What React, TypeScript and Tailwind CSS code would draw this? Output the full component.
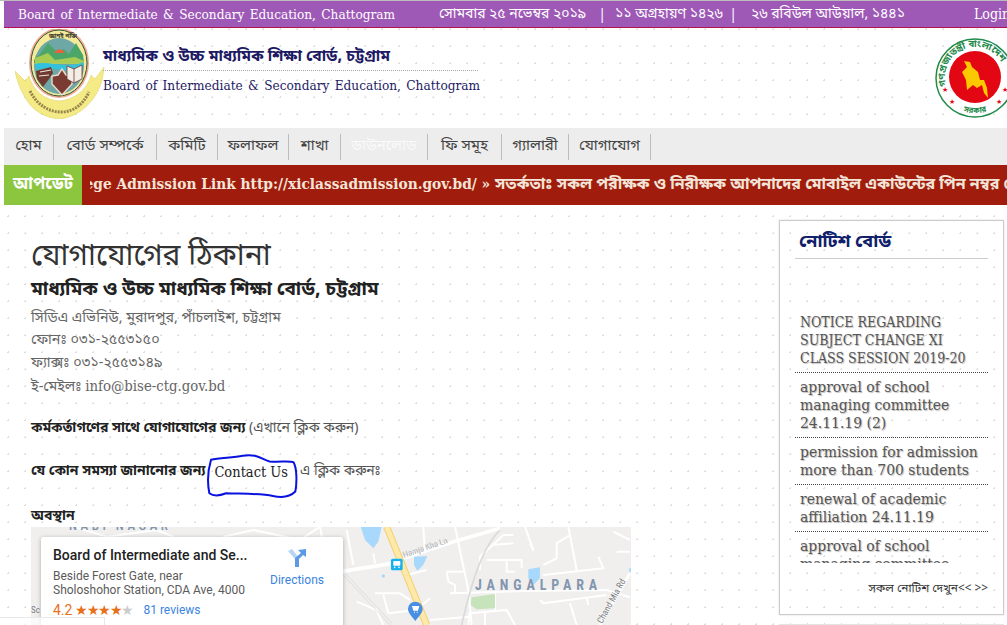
import React from "react";

const bn = "font-['Noto_Sans_Bengali','Noto_Serif_Bengali','Lohit_Bengali','Noto_Sans','DejaVu_Serif',serif]";
const serif = "font-['DejaVu_Serif','Noto_Sans_Bengali','Noto_Serif_Bengali',serif] [font-stretch:condensed]";

const menu = [
  { label: "হোম", w: "w-[50px]" },
  { label: "বোর্ড সম্পর্কে", w: "w-[103px]" },
  { label: "কমিটি", w: "w-[61px]" },
  { label: "ফলাফল", w: "w-[71px]" },
  { label: "শাখা", w: "w-[52px]" },
  { label: "ডাউনলোড", w: "w-[87px]", faded: true },
  { label: "ফি সমূহ", w: "w-[74px]" },
  { label: "গ্যালারী", w: "w-[67px]" },
  { label: "যোগাযোগ", w: "w-[82px]" },
];

const notices = [
  { text: ["NOTICE REGARDING", "SUBJECT CHANGE XI", "CLASS SESSION 2019-20"], cls: "h-[60px] text-[14px]" },
  { text: ["approval of school", "managing committee", "24.11.19 (2)"], cls: "h-[65px] pt-[5px] text-[15.5px]" },
  { text: ["permission for admission", "more than 700 students"], cls: "h-[47px] pt-[5px] text-[15.5px]" },
  { text: ["renewal of academic", "affiliation 24.11.19"], cls: "h-[47px] pt-[5px] text-[15.5px]" },
  { text: ["approval of school", "managing committee"], cls: "h-[46px] pt-[5px] text-[15.5px]" },
];

const BoardLogo = () => (
  <svg width="90" height="90" viewBox="0 0 90 90" className="shrink-0">
    <path d="M0 42 L10 52 L14 47 C18 62 30 71 44 72 C58 71 72 62 76 46 L80 50 L89 38 C88 52 84 62 78 70 C68 83 56 89 44 90 C30 89 17 81 11 70 C5 60 2 52 0 42Z" fill="#f4ea86" stroke="#dccf62" strokeWidth="0.5" />
    <path d="M15 62 C22 76 34 83 46 83 C58 83 68 76 74 63" fill="none" stroke="#77643a" strokeWidth="3" strokeDasharray="2 1" opacity="0.75" />
    <ellipse cx="44" cy="34" rx="30" ry="35" fill="#f3a78e" />
    <ellipse cx="44" cy="34" rx="28" ry="33" fill="#f5ea9b" stroke="#2e5a3a" strokeWidth="1" />
    <ellipse cx="44" cy="37" rx="25" ry="28" fill="#6fa6a6" />
    <path d="M19 32 C20 28 22 27 24 26 L33 14 L43 24 L49 20 L54 25 L61 14 L68 26 L69 34 L19 34Z" fill="#4aa768" />
    <path d="M39 24 A6 6 0 0 1 50 24Z" fill="#e6623c" />
    <path d="M20 29 L33 24 L40 31 L60 28 L69 32 L69 35 L20 35Z" fill="#bfd44e" opacity="0.8" />
    <path d="M20 35 C32 31 50 41 69 33 L68 39 C52 44 34 37 21 41Z" fill="#31c3de" />
    <path d="M21 42 L36 38 L38 44 L34 50 L28 58 L22 50Z" fill="#6e3a30" />
    <path d="M25 43 L36 41 M24 47 L34 46" stroke="#f1e6d8" strokeWidth="1.2" />
    <path d="M43 46 L47 40 L51 46 L57 47 L57 55 L47 66 L37 55 L37 47Z" fill="#7a3b32" stroke="#eadbcb" strokeWidth="1.4" />
    <path d="M52 37 L59 40 L67 36 L67 50 L59 54 L52 50Z" fill="#f4efe6" stroke="#6e3a30" strokeWidth="0.8" />
    <path d="M59 40 L59 54" stroke="#6e3a30" strokeWidth="0.8" />
    <text x="34" y="9" fontSize="6" fontWeight="700" fill="#3b3b2c" className={bn}>জ্ঞানই শক্তি</text>
  </svg>
);

const GovLogo = () => (
  <svg width="80" height="80" viewBox="0 0 80 80" className="shrink-0">
    <circle cx="40" cy="40" r="39" fill="#fff" stroke="#1f8a4a" strokeWidth="1.5" />
    <circle cx="40" cy="39" r="26" fill="#e30613" />
    <path d="M29 23 L35 24 L37 29 L43 34 L45 42 L49 42 L52 50 L53 60 L49 55 L47 47 L42 50 L38 47 L32 52 L31 42 L27 34 L32 29Z" fill="#fcc900" />
    <text x="7" y="54" fontSize="7" fill="#e30613">★</text>
    <text x="14" y="66" fontSize="7" fill="#e30613">★</text>
    <text x="67" y="54" fontSize="7" fill="#e30613">★</text>
    <text x="61" y="66" fontSize="7" fill="#e30613">★</text>
    <defs>
      <path id="sealTop" d="M11.4 48 A30 30 0 1 1 68.6 48" />
      <path id="sealBottom" d="M12.3 62 A36 36 0 0 0 67.7 62" />
    </defs>
    <text fontSize="9.5" fontWeight="700" fill="#1f8a4a" className={bn}>
      <textPath href="#sealTop">গণপ্রজাতন্ত্রী বাংলাদেশ</textPath>
    </text>
    <text fontSize="8" fontWeight="700" fill="#1f8a4a" textAnchor="middle" className={bn}>
      <textPath href="#sealBottom" startOffset="50%">সরকার</textPath>
    </text>
  </svg>
);

const MapBackdrop = () => (
  <svg width="600" height="98" viewBox="0 0 600 98" className="block">
    <rect width="600" height="98" fill="#f0efed" />
    <g transform="translate(309 -17) scale(0.3333)" fill="none" strokeLinejoin="round">
      <g stroke="#fff" strokeWidth="6">
        <path d="M-10 187 C60 175 100 170 155 160 L190 145 L340 95 L480 55" strokeWidth="11" />
        <path d="M345 50 L368 160 L385 240 L395 345 M250 50 L255 130 M320 185 L375 185 M320 185 L325 215 L345 225 L345 250" />
        <path d="M330 250 L600 242 L800 240 L870 262 M385 345 L388 310 L500 300 L525 345 M435 305 L435 345 M465 250 L465 300" />
        <path d="M105 250 L180 250 L210 270 M130 255 L145 310 L230 300 L270 265 M100 130 L105 160 M20 60 L40 165 M50 275 L110 300 L130 345 M270 330 L390 320" />
        <path d="M420 180 L420 140 L490 75 L520 75 M440 150 L545 150 L545 175 M455 105 L520 100 M500 150 L500 185 L525 185 M200 195 L260 180" />
        <path d="M555 50 L580 120 L570 100 M610 165 L650 145 L650 100 L690 75 M685 50 L710 180 M610 195 L790 175 L775 140 M600 270 L610 280 L800 255 M690 280 L710 345 M740 260 L745 285 M820 65 L870 90 M830 125 L870 125" />
        <path d="M780 345 L870 190" strokeWidth="9" />
        <path d="M-60 50 L-40 160 M-350 80 L-260 60 L-120 90 L-60 50 M-800 50 L-700 80 L-550 60 L-500 80" />
      </g>
      <path d="M10 195 L150 345 M16 190 L156 340" stroke="#d4d4d4" strokeWidth="2" />
      <path d="M480 60 C440 100 405 170 365 345" stroke="#d8dadd" strokeWidth="5" />
      <path d="M140 50 L260 345" stroke="#f5cf72" strokeWidth="21" />
      <path d="M140 50 L260 345" stroke="#fde9a8" strokeWidth="15" />
      <path d="M62 50 L125 50 L115 95 L100 115 L75 90Z M222 140 L262 138 L250 165 L232 182 L222 165Z M565 178 L600 172 L600 205 L580 225 L565 205Z M865 180 L875 170 L875 190Z" fill="#a8d8fb" />
      <circle cx="130" cy="198" r="5" fill="#a8d8fb" />
      <path d="M395 262 L465 252 L465 295 L410 298 L392 285Z" fill="#c6e3bb" />
      <rect x="153" y="146" width="35" height="35" rx="5" fill="#14b2ee" />
      <rect x="160" y="153" width="21" height="14" rx="2" fill="#fff" />
      <circle cx="164" cy="172" r="2.5" fill="#fff" />
      <circle cx="177" cy="172" r="2.5" fill="#fff" />
      <path d="M204 297 A22 22 0 0 1 248 297 C248 310 235 320 226 333 C217 320 204 310 204 297Z" fill="#4a90e2" />
      <path d="M216 288 L238 288 L234 302 L220 302Z M222 305 h3 v3 h-3Z M230 305 h3 v3 h-3Z" fill="#fff" />
    </g>
    <text x="373" y="31" fontSize="8.5" fill="#7b7f85" fontFamily="Roboto" stroke="#fff" strokeWidth="0.2" transform="rotate(-19 373 31)">Hamja Kha Ln</text>
    <text x="444" y="63" fontSize="14" fontWeight="700" letterSpacing="4.9" fill="#8396b0" fontFamily="Roboto">JANGALPARA</text>
    <text x="571" y="97" fontSize="9" fill="#7b7f85" fontFamily="Roboto" transform="rotate(-61 571 97)">Chand Mia Rd</text>
    <text x="38" y="3" fontSize="13" fontWeight="500" letterSpacing="3.5" fill="#7f93ad" fontFamily="Roboto">NABI NAGAR</text>
    <text x="0" y="86" fontSize="9" fill="#7b7f85" fontFamily="Roboto">Sc</text>
  </svg>
);

const App = () => {
  return (
    <div className={`relative h-[625px] w-[1007px] overflow-hidden bg-white bg-[radial-gradient(circle,#dedede_1px,transparent_1px)] bg-[size:17px_17px] bg-[position:0px_4px] ${serif}`}>
      <div className="border-t border-[#bbb]" />
      <div className="pl-1">
        <div className="flex h-[27px] items-center overflow-hidden whitespace-nowrap border-b border-[#b3124e] bg-[#9e59b7] pl-[14px] text-[14px] text-white">
          <span className="w-[421px] shrink-0 text-[13.5px] [word-spacing:1.5px]">Board of Intermediate &amp; Secondary Education, Chattogram</span>
          <span className={`w-[161px] shrink-0 ${bn}`}>সোমবার ২৫ নভেম্বর ২০১৯</span>
          <span className="w-[15px] shrink-0">|</span>
          <span className={`w-[116px] shrink-0 ${bn}`}>১১ অগ্রহায়ণ ১৪২৬</span>
          <span className="w-[20px] shrink-0">|</span>
          <span className={`w-[223px] shrink-0 ${bn}`}>২৬ রবিউল আউয়াল, ১৪৪১</span>
          <span>Login</span>
        </div>
      </div>

      <header className="flex h-[100px] items-start pl-[15px]">
        <div className="mt-[1px]">
          <BoardLogo />
        </div>
        <div className="mt-[16px] w-[375px] shrink-0 -ml-[2px]">
          <div className={`h-[27px] border-b border-dotted border-[#aaa] text-[15.7px] font-bold leading-[26px] text-[#1d1a63] ${bn}`}>
            মাধ্যমিক ও উচ্চ মাধ্যমিক শিক্ষা বোর্ড, চট্টগ্রাম
          </div>
          <div className="mt-[4px] whitespace-nowrap text-[13.5px] leading-[20px] text-[#1d1a63] [word-spacing:1.5px]">
            Board of Intermediate &amp; Secondary Education, Chattogram
          </div>
        </div>
        <div className="ml-auto -mr-[8px] mt-[10px]">
          <GovLogo />
        </div>
      </header>

      <div className="pl-1">
        <nav className="flex h-[37px] items-center bg-[#ededed]">
          {menu.map((m) => (
            <a
              key={m.label}
              className={`flex h-[26px] items-center justify-center whitespace-nowrap border-r border-[#bcbcbc] text-[15px] ${m.w} ${bn} ${m.faded ? "text-[#fafafa]" : "text-[#444]"}`}
            >
              {m.label}
            </a>
          ))}
        </nav>

        <div className="flex h-[40px]">
          <div className={`flex w-[78px] shrink-0 items-center justify-center bg-[#8cc63f] text-[16.5px] font-bold text-white ${bn}`}>
            আপডেট
          </div>
          <div className="flex-1 overflow-hidden bg-[#a01c0c] pl-[8px]">
            <div className="flex h-full items-center overflow-hidden whitespace-nowrap text-[15.3px] font-bold text-[#f3e4d8]">
              <span className="-ml-[36px]">
                College Admission Link http://xiclassadmission.gov.bd/ »{" "}
                <span className={`text-[16px] ${bn}`}>সতর্কতাঃ সকল পরীক্ষক ও নিরীক্ষক আপনাদের মোবাইল একাউন্টের পিন নম্বর গোপন রাখুন</span>
              </span>
            </div>
          </div>
        </div>
      </div>

      <main className="flex">
        <section className="ml-[31px] w-[600px] shrink-0 pt-[33px]">
          <h1 className={`text-[30px] leading-[38px] text-[#333] ${bn}`}>যোগাযোগের ঠিকানা</h1>
          <h2 className={`text-[19px] font-bold leading-[30px] text-[#222] ${bn}`}>
            মাধ্যমিক ও উচ্চ মাধ্যমিক শিক্ষা বোর্ড, চট্টগ্রাম
          </h2>
          <div className={`mt-[2px] text-[14.3px] leading-[22.3px] text-[#666] ${bn}`}>
            <p>সিডিএ এভিনিউ, মুরাদপুর, পাঁচলাইশ, চট্টগ্রাম</p>
            <p>ফোনঃ ০৩১-২৫৫৩১৫০</p>
            <p>ফ্যাক্সঃ ০৩১-২৫৫৩১৪৯</p>
            <p>ই-মেইলঃ <span className={`text-[14.8px] ${serif}`}>info@bise-ctg.gov.bd</span></p>
          </div>
          <p className={`mt-[19px] text-[14px] leading-[22px] text-[#555] ${bn}`}>
            <b className="text-[#222]">কর্মকর্তাগণের সাথে যোগাযোগের জন্য</b> (এখানে ক্লিক করুন)
          </p>
          <p className={`mt-[21px] flex items-center text-[14px] leading-[22px] text-[#555] ${bn}`}>
            <b className="text-[#222]">যে কোন সমস্যা জানানোর জন্য</b>
            <span className={`relative ml-[9px] text-[14.5px] text-[#222] ${serif}`}>
              Contact Us
              <svg width="92" height="47" viewBox="620 130 275 140" className="absolute -left-[8px] -top-[8px]" fill="none">
                <path d="M635 150 C660 143 700 145 730 138 C770 130 790 150 810 155 C840 158 870 152 882 158 C892 175 892 220 887 245 C870 262 850 265 820 258 C780 250 720 252 680 250 C660 258 640 258 630 250 C624 220 626 180 635 150Z" stroke="#0a12e0" strokeWidth="6" strokeLinejoin="round" />
              </svg>
            </span>
            <span className="ml-[12px]">এ ক্লিক করুনঃ</span>
          </p>
          <p className={`mt-[24px] text-[14px] font-bold leading-[20px] text-[#222] ${bn}`}>অবস্থান</p>
          <div className="relative h-[98px] w-[600px] overflow-hidden">
            <MapBackdrop />
            <div className="absolute left-[10px] top-[10px] h-[100px] w-[302px] rounded-[2px] bg-white px-[12px] pt-[9px] font-['Roboto',sans-serif] [font-stretch:normal] shadow-[0_1px_4px_rgba(0,0,0,0.3)]">
              <div className="flex">
                <div className="w-[210px] shrink-0">
                  <div className="whitespace-nowrap text-[14px] font-medium leading-[18px] text-[#222]">Board of Intermediate and Se...</div>
                  <div className="mt-[5px] whitespace-nowrap text-[12px] leading-[14px] text-[#5b5b5b]">Beside Forest Gate, near<br />Sholoshohor Station, CDA Ave, 4000</div>
                  <div className="mt-[4px] flex items-center whitespace-nowrap text-[12px] leading-[18px]">
                    <span className="text-[14px] text-[#e7711b]">4.2</span>
                    <span className="ml-[3px] text-[14px] tracking-[-1.6px] text-[#e7711b]">★★★★<span className="text-[#ccc]">★</span></span>
                    <span className="ml-[11px] text-[#3a84df]">81 reviews</span>
                  </div>
                </div>
                <div className="flex flex-1 flex-col items-center pt-[2px] text-[12px] text-[#3a84df]">
                  <svg width="20" height="20" viewBox="0 0 20 20">
                    <path d="M1 3 L5 1 L12 10 L12 19 L8 19 L8 11Z" fill="#b9d3f4" />
                    <path d="M8 19 L8 10 L14 5 L11 2 L19 1 L19 9 L16 7 L12 11 L12 19Z" fill="#5c9ae6" />
                  </svg>
                  <span className="mt-[3px]">Directions</span>
                </div>
              </div>
            </div>
          </div>
        </section>

        <aside className="ml-[148px] mt-[15px] w-[225px] shrink-0">
          <div className="h-[395px] border border-[#ccc] shadow-[0_0_2px_rgba(0,0,0,0.15)]">
            <div className="mx-[15px] h-[38px] border-b border-[#ccc]">
              <h3 className={`pl-[4px] pt-[2px] text-[18px] font-bold leading-[38px] text-[#10206a] ${bn}`}>নোটিশ বোর্ড</h3>
            </div>
            <ul className="mx-[15px] mt-[54px] h-[250px] overflow-hidden leading-[18px] text-[#555] [text-shadow:1px_1px_1px_#bbb]">
              {notices.map((n, i) => (
                <li key={i} className={`${n.cls} overflow-hidden whitespace-nowrap border-b border-dotted border-[#444] pl-[5px] last:border-b-0`}>
                  {n.text.map((line) => (
                    <div key={line}>{line}</div>
                  ))}
                </li>
              ))}
            </ul>
            <div className={`mx-[15px] mt-[17px] text-right text-[11.8px] leading-[18px] text-[#333] ${bn}`}>সকল নোটিশ দেখুন&lt;&lt; &gt;&gt;</div>
          </div>
          <div className="mt-[9px] h-[20px] border border-[#e4e4e4]" />
        </aside>
      </main>

      <div className="absolute bottom-0 left-0 h-[8px] w-[105px] border-t border-r border-[#e8e8e8] bg-white/70" />
    </div>
  );
};

export default App;
